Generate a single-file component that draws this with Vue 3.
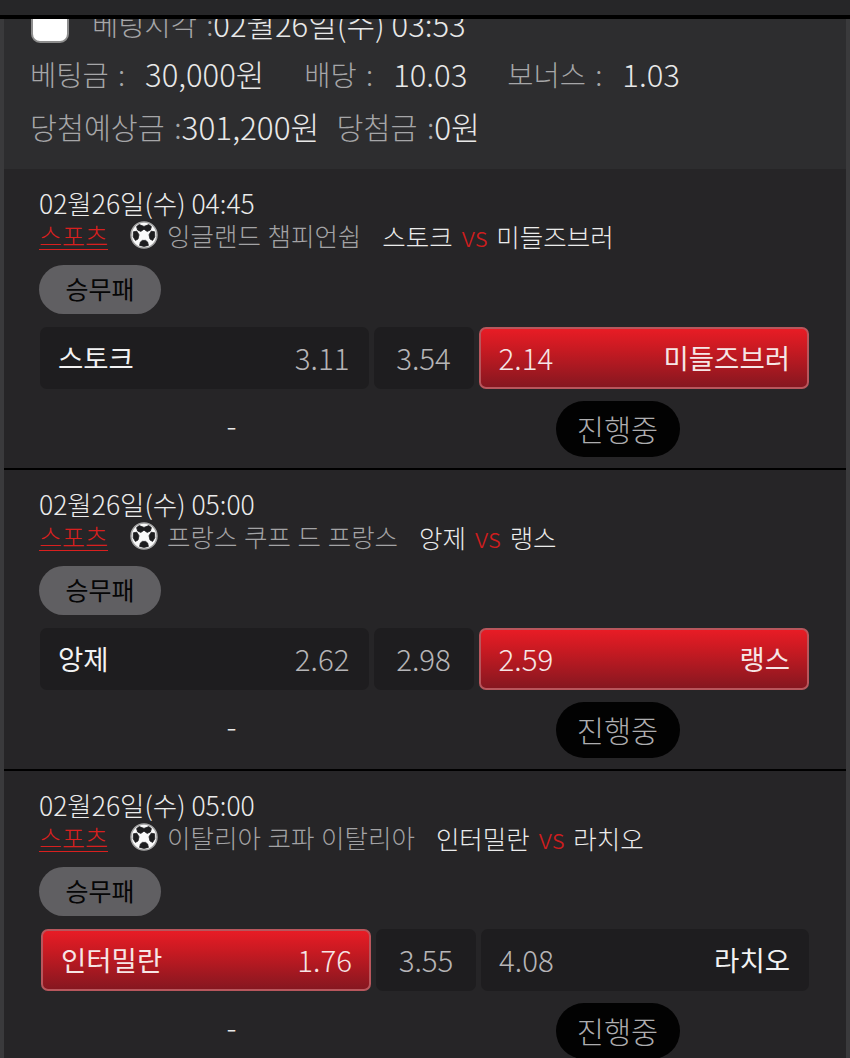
<template>
  <div class="page">
    <div class="topbar"></div>
    <div class="content">
      <section class="summary">
        <div class="summary__row summary__row--first">
          <span class="checkbox"></span>
          <span class="label">베팅시각 :</span><span class="value">02월26일(수) 03:53</span>
        </div>
        <div class="summary__row">
          <span class="label label--wide">베팅금 :</span><span class="value summary__gap">30,000원</span>
          <span class="label label--wide">배당 :</span><span class="value summary__gap">10.03</span>
          <span class="label label--wide">보너스 :</span><span class="value">1.03</span>
        </div>
        <div class="summary__row summary__row--last">
          <span class="label">당첨예상금 :</span><span class="value summary__gap-sm">301,200원</span>
          <span class="label">당첨금 :</span><span class="value">0원</span>
        </div>
      </section>

      <article v-for="game in games" :key="game.home" class="game">
        <div class="game__date">{{ game.date }}</div>
        <div class="game__info">
          <span class="game__sport">스포츠</span>
          <svg class="ball" viewBox="0 0 28 28" aria-hidden="true">
            <circle cx="14" cy="14" r="13" fill="#fafafa" stroke="#a5a5a5" stroke-width="1.5" />
            <g fill="#1d1d1f" stroke="#1d1d1f" stroke-width="0.8" stroke-linejoin="round">
              <path d="M9.2 3.6L14 5.4l4.8-1.8 2.6 2-1 3.4-3.2 1.4L14 8.2l-3.2 2.2L7.600 9 6.600 5.600z" />
              <path d="M3.400 10.800l3.400-.6 2.200 3.600-1 4.200-2.600 1.400-2.200-3.600z" />
              <path d="M24.600 10.800l-3.400-.6-2.200 3.600 1 4.200 2.600 1.400 2.200-3.600z" />
              <path d="M9.600 24.400l.8-3.400 2-1.600h3.200l2 1.600.8 3.400-4.400 1z" />
            </g>
          </svg>
          <span class="game__league">{{ game.league }}</span>
          <span class="game__teams">{{ game.home }} <em>vs</em> {{ game.away }}</span>
        </div>
        <div class="game__type">승무패</div>
        <div class="odds">
          <div
            class="odds__cell odds__cell--side"
            :class="{ 'is-picked': game.pick === 'home', 'odds__cell--home': game.pick === 'home' }"
          >
            <span class="odds__team">{{ game.home }}</span>
            <span class="odds__rate">{{ game.homeRate }}</span>
          </div>
          <div class="odds__cell odds__cell--draw">
            <span class="odds__rate">{{ game.drawRate }}</span>
          </div>
          <div class="odds__cell odds__cell--side" :class="{ 'is-picked': game.pick === 'away' }">
            <span class="odds__rate">{{ game.awayRate }}</span>
            <span class="odds__team">{{ game.away }}</span>
          </div>
        </div>
        <div class="result">
          <span class="result__score">-</span>
          <div class="result__status"><span class="status-pill">진행중</span></div>
        </div>
      </article>
    </div>
  </div>
</template>

<script setup>
const games = [
  {
    date: '02월26일(수) 04:45',
    league: '잉글랜드 챔피언쉽',
    home: '스토크',
    away: '미들즈브러',
    homeRate: '3.11',
    drawRate: '3.54',
    awayRate: '2.14',
    pick: 'away'
  },
  {
    date: '02월26일(수) 05:00',
    league: '프랑스 쿠프 드 프랑스',
    home: '앙제',
    away: '랭스',
    homeRate: '2.62',
    drawRate: '2.98',
    awayRate: '2.59',
    pick: 'away'
  },
  {
    date: '02월26일(수) 05:00',
    league: '이탈리아 코파 이탈리아',
    home: '인터밀란',
    away: '라치오',
    homeRate: '1.76',
    drawRate: '3.55',
    awayRate: '4.08',
    pick: 'home'
  }
]
</script>

<style>
html,
body {
  margin: 0;
  background: #2d2d2f;
}
</style>

<style scoped>
.page {
  width: 850px;
  height: 1058px;
  overflow: hidden;
  background: #3a3a3c;
  font-family: "Noto Sans CJK KR", "Noto Sans", sans-serif;
  font-weight: 300;
  color: #e8e8e8;
}

.topbar {
  position: relative;
  z-index: 1;
  height: 15px;
  background: #262628;
  border-bottom: 4px solid #000;
}

.content {
  margin: 0 4px;
  overflow: hidden;
}

.summary {
  display: flow-root;
  height: 150px;
  padding-left: 26px;
  background: #2d2d2f;
  font-size: 28.500px;
}

.summary__row {
  display: flex;
  align-items: center;
  height: 51px;
  white-space: nowrap;
}

.summary__row--first {
  margin-top: -20px;
  height: 49px;
}

.summary__row--last {
  height: 53px;
  font-size: 29.300px;
}

.summary__row--last .value {
  font-size: 31.500px;
}

.checkbox {
  width: 38px;
  height: 38px;
  margin: 0 23px 0 1px;
  box-sizing: border-box;
  flex: none;
  background: #fff;
  border: 2px solid #8d8d8d;
  border-radius: 9px;
}

.label {
  color: #a6a6a8;
  word-spacing: 3px;
}

.label--wide {
  margin-right: 20px;
}

.value {
  color: #e8e8e8;
  font-size: 31px;
}

.summary__gap {
  margin-right: 40px;
}

.summary__gap-sm {
  margin-right: 17px;
}

.game {
  height: 301px;
  box-sizing: border-box;
  padding: 17px 37px 0 35px;
  background: #262527;
  border-bottom: 2px solid #000;
}

.game__date {
  height: 34px;
  line-height: 34px;
  font-size: 26.500px;
  color: #ececec;
}

.game__info {
  display: flex;
  align-items: center;
  height: 30px;
  line-height: 30px;
  font-size: 25.500px;
  white-space: nowrap;
}

.game__sport {
  color: #d8201f;
  font-size: 25px;
  text-decoration: underline;
  text-underline-offset: 3px;
  text-decoration-thickness: 1px;
}

.ball {
  width: 28px;
  height: 28px;
  margin: 0 9px 0 22px;
  flex: none;
}

.game__league {
  color: #a3a3a5;
  margin-right: 21px;
  word-spacing: 1px;
}

.game__teams {
  color: #ececec;
  word-spacing: 3px;
}

.game__teams em {
  font-style: normal;
  font-size: 28px;
  color: #cf1d1e;
}

.game__type {
  width: 122px;
  height: 49px;
  padding-bottom: 3px;
  box-sizing: border-box;
  margin-top: 15px;
  display: flex;
  align-items: center;
  justify-content: center;
  border-radius: 25px;
  background: #605f62;
  color: #060606;
  font-size: 25px;
  font-weight: 400;
}

.odds {
  display: flex;
  gap: 5px;
  margin-top: 13px;
  margin-left: 1px;
}

.odds__cell {
  height: 62px;
  box-sizing: border-box;
  display: flex;
  align-items: center;
  justify-content: space-between;
  padding: 0 19px 3px 18px;
  border-radius: 7px;
  background: #1e1d1f;
  font-size: 29.500px;
}

.odds__cell--side {
  flex: 1 1 0;
}

.odds__cell--home {
  flex: 0 0 330px;
  margin-left: 1px;
}

.odds__cell--draw {
  flex: 0 0 100px;
  justify-content: center;
  padding: 0 0 3px;
}

.odds__cell.is-picked {
  padding-right: 17px;
  border: 2px solid #b8565c;
  background: linear-gradient(180deg, #e81c25 0%, #c81a22 35%, #861720 100%);
}

.odds__rate {
  color: #b6b5b7;
}

.odds__team {
  color: #f2f2f2;
  font-size: 27.500px;
  font-weight: 400;
}

.is-picked .odds__rate,
.is-picked .odds__team {
  color: #f6e6e6;
}

.result {
  display: grid;
  grid-template-columns: 1fr 1fr;
  margin-top: 12px;
  align-items: center;
}

.result__score {
  justify-self: center;
  margin-bottom: 10px;
  font-size: 30px;
  line-height: 1;
  color: #e8e8e8;
}

.result__status {
  justify-self: center;
  margin-left: 2px;
}

.status-pill {
  display: flex;
  align-items: center;
  justify-content: center;
  width: 124px;
  height: 56px;
  padding-bottom: 2px;
  box-sizing: border-box;
  border-radius: 28px;
  background: #020202;
  color: #adadaf;
  font-size: 29.500px;
}
</style>
